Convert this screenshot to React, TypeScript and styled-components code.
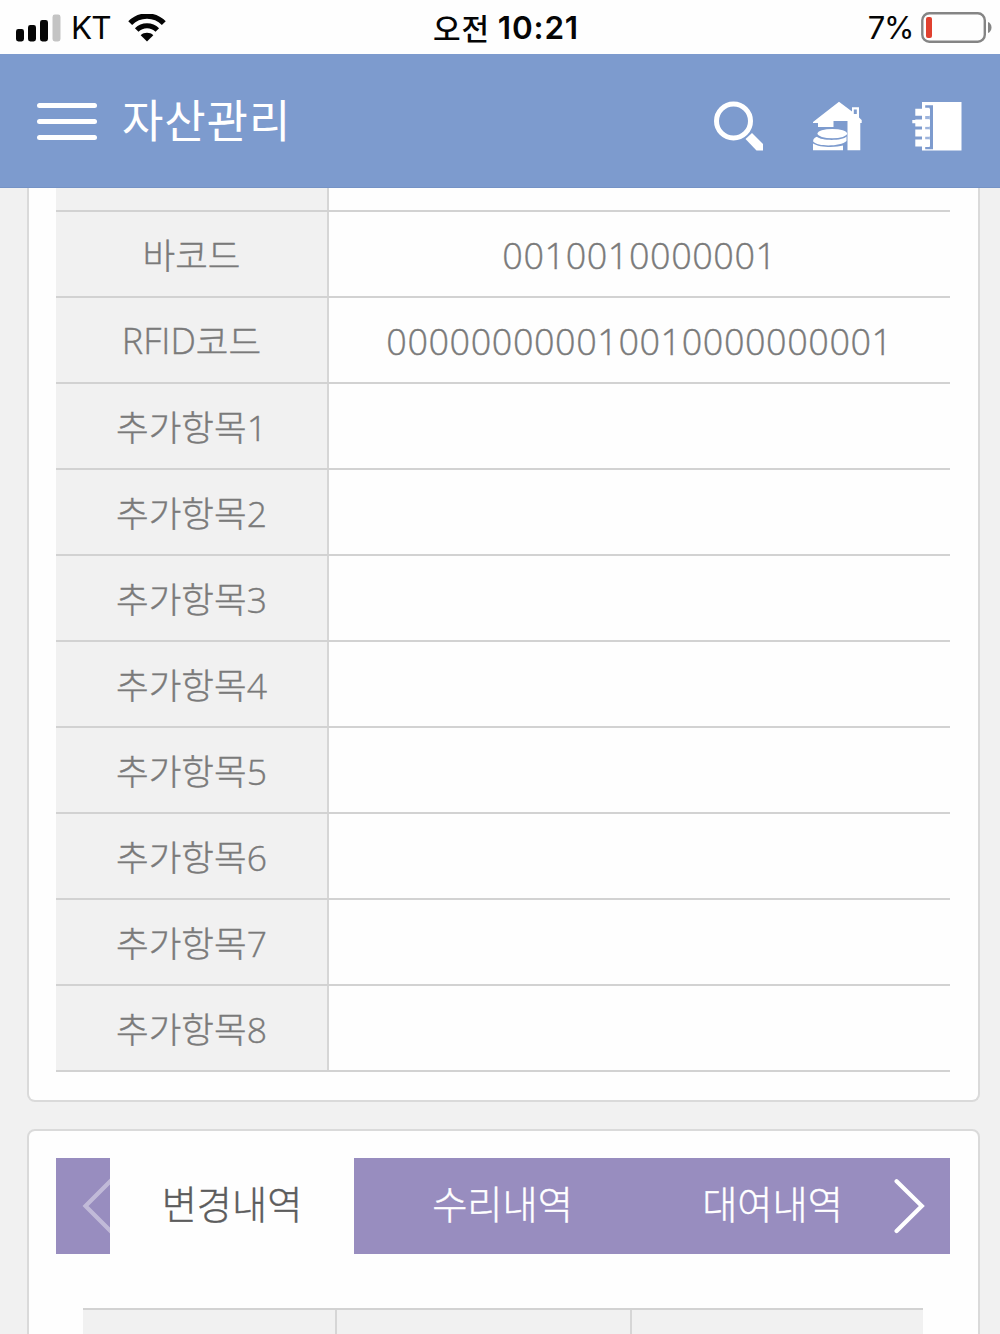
import React from "react";
import styled, { createGlobalStyle } from "styled-components";

const GlobalStyle = createGlobalStyle`
  * { box-sizing: border-box; }
  body {
    margin: 0;
    background: #f1f1f1;
    font-family: "Open Sans", "Noto Sans CJK KR", sans-serif;
  }
`;

const Screen = styled.div`
  width: 1000px;
  height: 1334px;
  overflow: hidden;
  display: flex;
  flex-direction: column;
  background: #f1f1f1;
`;

const StatusBar = styled.div`
  flex: none;
  height: 54px;
  display: grid;
  grid-template-columns: 1fr auto 1fr;
  align-items: center;
  padding: 0 8px 0 15px;
  background: #fefefe;
  color: #050505;
  font-family: Inter, "Noto Sans CJK KR", sans-serif;
`;

const StatusSide = styled.div<{ $end?: boolean }>`
  display: flex;
  align-items: center;
  justify-content: ${(p) => (p.$end ? "flex-end" : "flex-start")};
  & > svg { margin-bottom: 1px; }
`;

const Carrier = styled.span`
  margin: 0 17px 0 10px;
  font-size: 31.5px;
  line-height: 54px;
  letter-spacing: -1px;
`;

const Clock = styled.div`
  display: flex;
  align-items: center;
  gap: 8px;
  margin-left: 5px;
  line-height: 54px;
  font-size: 31.5px;
  font-weight: 600;
  letter-spacing: 0.8px;
`;

const Meridiem = styled.span`
  padding-bottom: 2px;
  font-family: "Noto Sans CJK KR", sans-serif;
  font-weight: 500;
  font-size: 30px;
  line-height: 54px;
`;

const Percent = styled.span`
  margin-right: 8px;
  font-size: 31px;
  line-height: 54px;
  letter-spacing: -1.4px;
`;

const Header = styled.header`
  flex: none;
  height: 134px;
  display: flex;
  align-items: center;
  padding: 0 38px 0 37px;
  background: #7d9bce;
  border-bottom: 1px solid #7593c6;
`;

const MenuButton = styled.div`
  display: flex;
  flex-direction: column;
  gap: 11px;
  width: 60px;
  padding-top: 1px;
`;

const MenuLine = styled.span`
  height: 5px;
  border-radius: 3px;
  background: #fff;
`;

const Title = styled.h1`
  flex: 1;
  margin: 1px 0 0 25px;
  color: #fff;
  font-size: 45px;
  font-weight: 400;
  line-height: 60px;
  letter-spacing: 0.9px;
`;

const Actions = styled.div`
  display: flex;
  gap: 50px;
  padding-top: 11px;
  & > svg:first-child { margin-right: -2px; }
`;

const Content = styled.main`
  flex: 1;
  padding: 0 20px 0 27px;
`;

const Card = styled.section<{ $continued?: boolean }>`
  border: 2px solid #dadada;
  border-radius: ${(p) => (p.$continued ? "0 0 8px 8px" : "8px")};
  border-top-width: ${(p) => (p.$continued ? 0 : 2)}px;
  padding: ${(p) => (p.$continued ? "0 28px 28px 27px" : "27px 28px 0 27px")};
  margin-bottom: 27px;
  background: #fefefe;
`;

const Row = styled.div<{ $height?: number }>`
  display: grid;
  grid-template-columns: 273px 1fr;
  height: ${(p) => p.$height ?? 86}px;
  border-bottom: 2px solid #d2d2d2;
`;

const Label = styled.div`
  display: flex;
  align-items: center;
  justify-content: center;
  padding-top: 2px;
  border-right: 2px solid #d6d6d6;
  background: #f1f1f1;
  color: #7a7a7a;
  font-size: 35.5px;
  font-weight: 300;
  line-height: 50px;
  -webkit-text-stroke: 0.4px #7a7a7a;
`;

const Latin = styled.span`
  font-size: 36px;
`;

const Value = styled.div`
  display: flex;
  align-items: center;
  justify-content: center;
  padding-top: 2px;
  color: #7a7a7a;
  font-size: 36px;
  font-weight: 300;
  letter-spacing: 0.55px;
  -webkit-text-stroke: 0.4px #7a7a7a;
`;

const Tabs = styled.nav`
  display: flex;
  height: 96px;
  background: #988dbf;
`;

const TabArrow = styled.div<{ $faded?: boolean }>`
  display: flex;
  align-items: center;
  width: ${(p) => (p.$faded ? 54 : 56)}px;
  overflow: hidden;
  padding-left: ${(p) => (p.$faded ? 26 : 0)}px;
  opacity: ${(p) => (p.$faded ? 0.4 : 1)};
  & > svg { flex: none; }
`;

const Tab = styled.div<{ $active?: boolean; $width: number }>`
  display: flex;
  align-items: center;
  justify-content: center;
  width: ${(p) => p.$width}px;
  padding-bottom: 4px;
  background: ${(p) => (p.$active ? "#fefefe" : "transparent")};
  color: ${(p) => (p.$active ? "#5c5c5c" : "#fff")};
  font-size: 38.2px;
  font-weight: 300;
  line-height: 56px;
  -webkit-text-stroke: 0.4px ${(p) => (p.$active ? "#5c5c5c" : "#fff")};
`;

const History = styled.div`
  display: grid;
  grid-template-columns: 254px 295px 1fr;
  height: 80px;
  margin: 54px 27px 0;
  border-top: 2px solid #d2d2d2;
`;

const HistoryHead = styled.div<{ $last?: boolean }>`
  background: #f1f1f1;
  border-right: ${(p) => (p.$last ? 0 : 2)}px solid #d6d6d6;
`;

const SignalIcon = () => (
  <svg width="46" height="28" viewBox="0 0 46 28">
    <rect x="1" y="15" width="8" height="12.5" rx="2.4" fill="#050505" />
    <rect x="13" y="11" width="8" height="16.5" rx="2.4" fill="#050505" />
    <rect x="25" y="6" width="8" height="21.5" rx="2.4" fill="#050505" />
    <rect x="37.5" y="0.5" width="8" height="27" rx="2.4" fill="#c4c4c4" />
  </svg>
);

const WifiIcon = () => (
  <svg width="38" height="28" viewBox="0 0 38 28">
    <path d="M2.2 9.2A23.4 23.4 0 0 1 35.8 9.2" fill="none" stroke="#050505" strokeWidth="5.4" />
    <path d="M8.7 16A14.5 14.5 0 0 1 29.3 16" fill="none" stroke="#050505" strokeWidth="5" />
    <path d="M19 27.5L12.7 21.2C16 18 22 18 25.3 21.2Z" fill="#050505" />
  </svg>
);

const BatteryIcon = () => (
  <svg width="71" height="31" viewBox="0 0 71 31">
    <rect x="1.3" y="1.3" width="62.5" height="28.4" rx="7" fill="none" stroke="#858585" strokeWidth="2.4" />
    <rect x="5" y="5" width="6" height="21" rx="2" fill="#e0402f" />
    <path d="M67 10C71.7 11.5 71.7 19.5 67 21Z" fill="#858585" />
  </svg>
);

const SearchIcon = () => (
  <svg width="50" height="50" viewBox="0 0 50 50">
    <circle cx="19.5" cy="20" r="17" fill="none" stroke="#fff" strokeWidth="5" />
    <path d="M31.5 38L38 32L49 43V49.5H42.5Z" fill="#fff" />
  </svg>
);

const HouseIcon = () => (
  <svg width="50" height="50" viewBox="0 0 50 50">
    <path
      d="M1 21L27 0.8L40 10.5V6.3H47V16.5L49.7 19V22H48.3V49.3H35.5V20H21.5V26H6V22H1Z"
      fill="#fff"
    />
    <rect x="41.8" y="8.5" width="3" height="4.5" fill="#7d9bce" />
    <path d="M1 42.5C7 46.8 24 46.8 31 44.6V49.3H1Z" fill="#fff" />
    <path d="M5 35.8C1.5 37 1 39 1.3 40.8C6 46 29 45.5 34.5 40V35.5C31 40 9 40 5 35.8Z" fill="#fff" />
    <ellipse cx="20.3" cy="32.6" rx="14.8" ry="4.7" fill="#fff" />
  </svg>
);

const NotebookIcon = () => (
  <svg width="50" height="50" viewBox="0 0 50 50">
    <rect x="10" y="1" width="39.5" height="48.5" fill="#fff" />
    <path d="M13.2 4.2H21V48.2H13.2V46H17.5V6.8H13.2Z" fill="#7d9bce" />
    <path d="M13.2 15H17.6V18.3H13.2ZM13.2 25.7H17.6V28.5H13.2ZM13.2 35.5H17.6V38.5H13.2Z" fill="#9db4dc" />
    <path
      d="M3.3 7.8H18V14.8H3.3ZM3.3 18.4H18V25.4H3.3ZM3.3 28.6H18V35.4H3.3ZM3.3 38.6H18V45.4H3.3ZM0.3 19H3.5V22.3H0.3Z"
      fill="#fff"
    />
  </svg>
);

const Chevron = ({ left }: { left?: boolean }) => (
  <svg width="32" height="56" viewBox="0 0 32 56">
    <path
      d={left ? "M30 1.5L3.5 28L30 54.5" : "M2.6 3.3L27.8 28L2.6 53"}
      fill="none"
      stroke="#fff"
      strokeWidth="4.2"
      strokeLinecap="round"
    />
  </svg>
);

const extraFields = [1, 2, 3, 4, 5, 6, 7, 8];

export default function App() {
  return (
    <Screen>
      <GlobalStyle />
      <StatusBar>
        <StatusSide>
          <SignalIcon />
          <Carrier>KT</Carrier>
          <WifiIcon />
        </StatusSide>
        <Clock>
          <Meridiem>오전</Meridiem>
          <span>10:21</span>
        </Clock>
        <StatusSide $end>
          <Percent>7%</Percent>
          <BatteryIcon />
        </StatusSide>
      </StatusBar>
      <Header>
        <MenuButton>
          <MenuLine />
          <MenuLine />
          <MenuLine />
        </MenuButton>
        <Title>자산관리</Title>
        <Actions>
          <SearchIcon />
          <HouseIcon />
          <NotebookIcon />
        </Actions>
      </Header>
      <Content>
        <Card $continued>
          <Row $height={24}>
            <Label />
            <Value />
          </Row>
          <Row>
            <Label>바코드</Label>
            <Value>0010010000001</Value>
          </Row>
          <Row>
            <Label>
              <Latin>RFID</Latin>코드
            </Label>
            <Value>000000000010010000000001</Value>
          </Row>
          {extraFields.map((n) => (
            <Row key={n}>
              <Label>추가항목{n}</Label>
              <Value />
            </Row>
          ))}
        </Card>
        <Card>
          <Tabs>
            <TabArrow $faded>
              <Chevron left />
            </TabArrow>
            <Tab $active $width={244}>변경내역</Tab>
            <Tab $width={297}>수리내역</Tab>
            <Tab $width={243}>대여내역</Tab>
            <TabArrow>
              <Chevron />
            </TabArrow>
          </Tabs>
          <History>
            <HistoryHead />
            <HistoryHead />
            <HistoryHead $last />
          </History>
        </Card>
      </Content>
    </Screen>
  );
}
